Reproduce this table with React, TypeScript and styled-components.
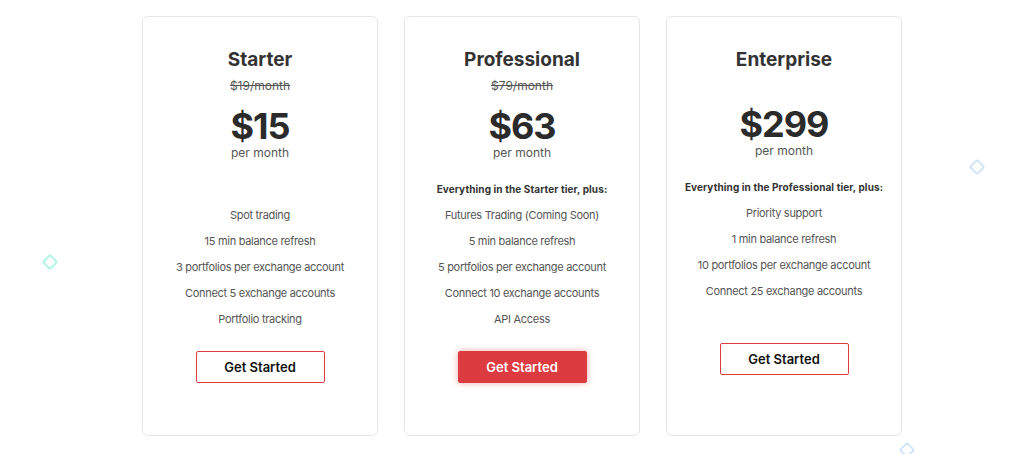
import styled, { createGlobalStyle } from "styled-components";

const GlobalStyle = createGlobalStyle`
  html, body {
    margin: 0;
    padding: 0;
    background: #ffffff;
    font-family: Inter, "Open Sans", sans-serif;
    color: #333333;
  }
  * {
    box-sizing: border-box;
  }
`;

const Page = styled.div`
  position: relative;
  width: 1024px;
  height: 454px;
  overflow: hidden;
  padding: 16px 0 0 142px;
`;

const Deco = styled.span<{ $x: number; $y: number; $color: string }>`
  position: absolute;
  left: ${(p) => p.$x}px;
  top: ${(p) => p.$y}px;
  width: 12px;
  height: 12px;
  border: 2px solid ${(p) => p.$color};
  border-radius: 3px;
  transform: rotate(45deg);
`;

const CardRow = styled.div`
  display: flex;
  gap: 26px;
`;

const Card = styled.div`
  width: 236px;
  height: 420px;
  border: 1px solid #e6e6e6;
  border-radius: 6px;
  background: #fff;
  display: flex;
  flex-direction: column;
  align-items: center;
  padding-top: 31px;
  text-align: center;
`;

const Title = styled.h2`
  margin: 0;
  font-size: 19px;
  line-height: 24px;
  font-weight: 700;
  color: #333;
`;

const OldPrice = styled.div`
  margin-top: 6px;
  min-height: 14px;
  line-height: 16px;
  font-size: 12px;
  color: #555;
  text-decoration: line-through;
`;

const Price = styled.div`
  margin-top: 13px;
  font-size: 36px;
  line-height: 38px;
  font-weight: 700;
  color: #2b2b2b;
  letter-spacing: -1px;
`;

const Period = styled.div`
  font-size: 12px;
  line-height: 16px;
  color: #555;
`;

const Includes = styled.div`
  margin-top: 21px;
  min-height: 14px;
  font-size: 10px;
  line-height: 14px;
  font-weight: 700;
  color: #333;
  letter-spacing: 0.1px;
`;

const Features = styled.ul`
  list-style: none;
  margin: 11px 0 24px;
  padding: 0;
  min-height: 114px;
  display: flex;
  flex-direction: column;
  gap: 10px;
`;

const Feature = styled.li`
  font-size: 11px;
  line-height: 16px;
  color: #555;
  letter-spacing: -0.3px;
`;

const Button = styled.button<{ $filled?: boolean }>`
  width: 129px;
  height: 32px;
  border: 1px solid #dc3b40;
  border-radius: 2px;
  background: ${(p) => (p.$filled ? "#dc3b40" : "#fff")};
  color: ${(p) => (p.$filled ? "#fff" : "#111")};
  box-shadow: ${(p) => (p.$filled ? "0 0 6px rgba(220, 59, 64, 0.45)" : "none")};
  font-family: Inter, "Open Sans", sans-serif;
  font-size: 13px;
  font-weight: 600;
  cursor: pointer;
`;

interface Plan {
  name: string;
  old: string;
  price: string;
  includes: string;
  features: string[];
  featured?: boolean;
}

const plans: Plan[] = [
  {
    name: "Starter",
    old: "$19/month",
    price: "$15",
    includes: "",
    features: [
      "Spot trading",
      "15 min balance refresh",
      "3 portfolios per exchange account",
      "Connect 5 exchange accounts",
      "Portfolio tracking",
    ],
  },
  {
    name: "Professional",
    old: "$79/month",
    price: "$63",
    includes: "Everything in the Starter tier, plus:",
    features: [
      "Futures Trading (Coming Soon)",
      "5 min balance refresh",
      "5 portfolios per exchange account",
      "Connect 10 exchange accounts",
      "API Access",
    ],
    featured: true,
  },
  {
    name: "Enterprise",
    old: "",
    price: "$299",
    includes: "Everything in the Professional tier, plus:",
    features: [
      "Priority support",
      "1 min balance refresh",
      "10 portfolios per exchange account",
      "Connect 25 exchange accounts",
    ],
  },
];

const App = () => {
  return (
    <Page>
      <GlobalStyle />
      <Deco $x={44} $y={256} $color="#aef3e3" />
      <Deco $x={971} $y={161} $color="#d0e4f6" />
      <Deco $x={901} $y={444} $color="#d0e4f6" />
      <CardRow>
        {plans.map((plan) => (
          <Card key={plan.name}>
            <Title>{plan.name}</Title>
            <OldPrice>{plan.old}</OldPrice>
            <Price>{plan.price}</Price>
            <Period>per month</Period>
            <Includes>{plan.includes}</Includes>
            <Features>
              {plan.features.map((f) => (
                <Feature key={f}>{f}</Feature>
              ))}
            </Features>
            <Button $filled={plan.featured}>Get Started</Button>
          </Card>
        ))}
      </CardRow>
    </Page>
  );
};

export default App;
